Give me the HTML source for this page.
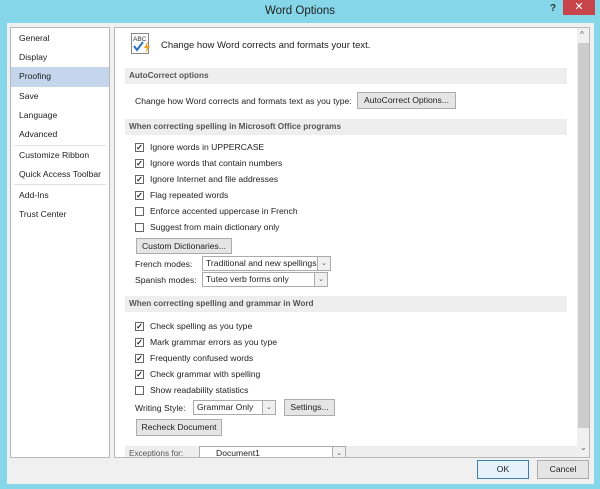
<!DOCTYPE html><html><head><style>
*{margin:0;padding:0;box-sizing:border-box}
body{width:600px;height:489px;background:#85d6e8;font-family:"Liberation Sans",sans-serif;font-size:8.6px;color:#222;position:relative;overflow:hidden}
.a{position:absolute;white-space:nowrap}
.client{position:absolute;left:7px;top:23px;width:587px;height:461px;background:#f0f0f0}
.nav{position:absolute;left:10px;top:27px;width:100px;height:431px;background:#fff;border:1px solid #b8b8b8}
.main{position:absolute;left:114px;top:27px;width:476px;height:431px;background:#fff;border:1px solid #b8b8b8;overflow:hidden}
.hd{position:absolute;left:10px;width:442px;height:16px;background:#eeeeee;color:#555;font-weight:bold;padding:3px 4px;font-size:8.2px}
.cb{position:absolute;width:9px;height:9px;border:1px solid #666;background:#fff;font-size:8px;line-height:7px;text-align:center;font-weight:bold}
.btn{position:absolute;background:#e5e5e5;border:1px solid #acacac;text-align:center;line-height:14px}
.sel{position:absolute;border:1px solid #ababab;background:#fff;height:15px;line-height:13px;padding-left:3px}
.sel i{position:absolute;right:0;top:0;width:13px;height:13px;border-left:1px solid #ababab;background:#f0f0f0;font-style:normal;text-align:center;font-size:7px;color:#555}
.ni{position:absolute;left:8px}
</style></head><body>
<div class="a" style="left:0;top:5px;width:600px;text-align:center;font-size:11.5px;color:#222">Word Options</div>
<div class="a" style="left:550px;top:3px;font-weight:bold;font-size:10px;color:#333">?</div>
<div class="a" style="left:563px;top:0;width:32px;height:15px;background:#c7444a;color:#fff;text-align:center;font-size:11px;line-height:15px">✕</div>
<div class="client"></div>
<div class="nav">
<div class="ni" style="top:5px">General</div>
<div class="ni" style="top:24px">Display</div>
<div style="position:absolute;left:0;top:39px;width:98px;height:20px;background:#c5d5ec"></div>
<div class="ni" style="top:43px">Proofing</div>
<div class="ni" style="top:63px">Save</div>
<div class="ni" style="top:82px">Language</div>
<div class="ni" style="top:101px">Advanced</div>
<div style="position:absolute;left:3px;top:117px;width:92px;height:1px;background:#e2e2e2"></div>
<div class="ni" style="top:122px">Customize Ribbon</div>
<div class="ni" style="top:141px">Quick Access Toolbar</div>
<div style="position:absolute;left:3px;top:156px;width:92px;height:1px;background:#e2e2e2"></div>
<div class="ni" style="top:162px">Add-Ins</div>
<div class="ni" style="top:181px">Trust Center</div>
</div>
<div class="main">
<svg class="a" style="left:16px;top:5px" width="22" height="22"><rect x="0.5" y="0.5" width="17" height="20" fill="#fff" stroke="#888"/><text x="2" y="8" font-size="6.5" font-family="Liberation Sans" fill="#333">ABC</text><path d="M3 13l3 4 6-8" stroke="#2b6fc0" stroke-width="2" fill="none"/><path d="M17 8l-4 7h3l-2 6 5-8h-3z" fill="#f0a020"/></svg>
<div class="a" style="left:46px;top:12px;font-size:9.5px">Change how Word corrects and formats your text.</div>
<div class="hd" style="top:40px">AutoCorrect options</div>
<div class="a" style="left:20px;top:68px">Change how Word corrects and formats text as you type:</div>
<div class="btn" style="left:242px;top:64px;width:99px;height:17px">AutoCorrect Options...</div>
<div class="hd" style="top:91px">When correcting spelling in Microsoft Office programs</div>
<div class="cb" style="left:20px;top:115px">✓</div><div class="a" style="left:35px;top:114px">Ignore words in UPPERCASE</div>
<div class="cb" style="left:20px;top:131px">✓</div><div class="a" style="left:35px;top:130px">Ignore words that contain numbers</div>
<div class="cb" style="left:20px;top:147px">✓</div><div class="a" style="left:35px;top:146px">Ignore Internet and file addresses</div>
<div class="cb" style="left:20px;top:163px">✓</div><div class="a" style="left:35px;top:162px">Flag repeated words</div>
<div class="cb" style="left:20px;top:179px"></div><div class="a" style="left:35px;top:178px">Enforce accented uppercase in French</div>
<div class="cb" style="left:20px;top:195px"></div><div class="a" style="left:35px;top:194px">Suggest from main dictionary only</div>
<div class="btn" style="left:21px;top:210px;width:96px;height:16px">Custom Dictionaries...</div>
<div class="a" style="left:20px;top:231px">French modes:</div>
<div class="sel" style="left:87px;top:228px;width:129px">Traditional and new spellings<i>⌄</i></div>
<div class="a" style="left:20px;top:247px">Spanish modes:</div>
<div class="sel" style="left:87px;top:244px;width:126px">Tuteo verb forms only<i>⌄</i></div>
<div class="hd" style="top:268px">When correcting spelling and grammar in Word</div>
<div class="cb" style="left:20px;top:294px">✓</div><div class="a" style="left:35px;top:293px">Check spelling as you type</div>
<div class="cb" style="left:20px;top:310px">✓</div><div class="a" style="left:35px;top:309px">Mark grammar errors as you type</div>
<div class="cb" style="left:20px;top:326px">✓</div><div class="a" style="left:35px;top:325px">Frequently confused words</div>
<div class="cb" style="left:20px;top:342px">✓</div><div class="a" style="left:35px;top:341px">Check grammar with spelling</div>
<div class="cb" style="left:20px;top:358px"></div><div class="a" style="left:35px;top:357px">Show readability statistics</div>
<div class="a" style="left:20px;top:375px">Writing Style:</div>
<div class="sel" style="left:78px;top:372px;width:83px">Grammar Only<i>⌄</i></div>
<div class="btn" style="left:169px;top:371px;width:51px;height:17px">Settings...</div>
<div class="btn" style="left:21px;top:391px;width:86px;height:17px">Recheck Document</div>
<div class="hd" style="top:418px;width:452px;font-weight:normal">Exceptions for:</div>
<div class="sel" style="left:84px;top:418px;width:147px;padding-left:16px">Document1<i>⌄</i></div>
<div style="position:absolute;left:462px;top:0;width:13px;height:429px;background:#f0f0f0"></div>
<div style="position:absolute;left:463px;top:15px;width:11px;height:385px;background:#cdcdcd"></div>
<div class="a" style="left:465px;top:2px;font-size:8px;color:#555">^</div>
<div class="a" style="left:465px;top:415px;font-size:8px;color:#555">⌄</div>
</div>
<div class="btn" style="left:477px;top:460px;width:52px;height:19px;line-height:17px;border-color:#3c7fb1;background:#e5f1fb">OK</div>
<div class="btn" style="left:537px;top:460px;width:52px;height:19px;line-height:17px">Cancel</div>
</body></html>
